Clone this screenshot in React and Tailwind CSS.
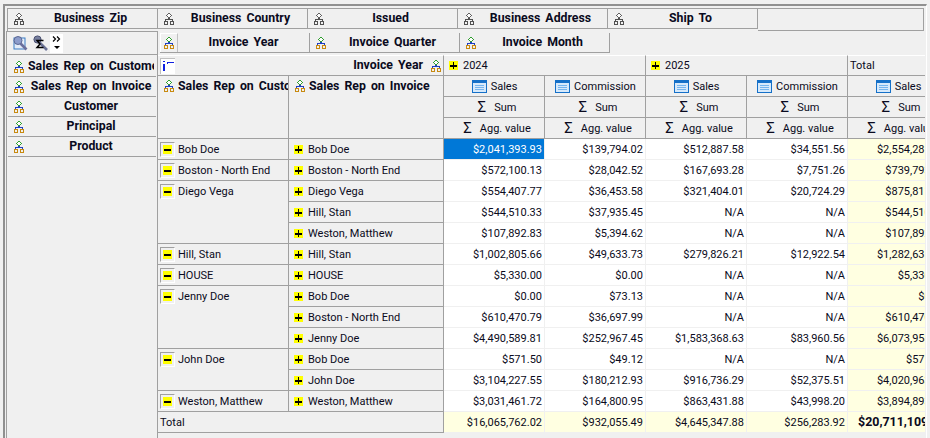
import React from "react";

const Hier = ({ gray }) => {
  const top = gray ? "#606060" : "#2e9e2e";
  const line = gray ? "#505050" : "#2040c0";
  const box = gray ? "#505050" : "#c88a10";
  return (
    <svg width="10" height="12" viewBox="0 0 10 12" className="shrink-0" shapeRendering="crispEdges">
      <path d="M4 0h2v1h1v1h1v1h-1v1h-1v1h-2v-1h-1v-1h-1v-1h1v-1h1z" fill={top} />
      <path d="M4 1h2v1h1v1h-1v1h-2v-1h-1v-1h1z" fill="#fff" />
      <path d="M4 5h2v1h3v2h-1v-1h-6v1h-1v-2h3z" fill={line} />
      <path d="M0.5 8.5h3v3h-3zM6.5 8.5h3v3h-3z" fill="none" stroke={box} />
    </svg>
  );
};

const Plus = () => (
  <span className="relative inline-block w-[9px] h-[9px] bg-[#ffff00] shrink-0">
    <span className="absolute left-[1px] top-[4px] w-[7px] h-[2px] bg-black" />
    <span className="absolute left-[4px] top-[1px] w-[1px] h-[7px] bg-black" />
  </span>
);

const Minus = () => (
  <span className="flex items-center justify-center w-[15px] h-[15px] shrink-0 border border-l-[#a0a0a0] border-t-[#a0a0a0] border-r-white border-b-white">
    <span className="relative w-[9px] h-[9px] bg-[#ffff00]">
      <span className="absolute left-[1px] top-[4px] w-[7px] h-[2px] bg-black" />
    </span>
  </span>
);

const Measure = () => (
  <svg width="15" height="13" viewBox="0 0 15 13" className="shrink-0" shapeRendering="crispEdges">
    <rect x="0.5" y="0.5" width="14" height="12" fill="#d6e9fb" stroke="#1570c8" />
    <rect x="1" y="1" width="13" height="2" fill="#1570c8" />
    <path d="M3 5h9M3 7h9M3 9h9" stroke="#74b4ee" />
  </svg>
);

const Tool1 = () => (
  <svg width="16" height="16" viewBox="0 0 16 16" className="shrink-0">
    <rect x="2" y="3" width="11" height="11" fill="#e3ecf8" stroke="#3a7cc4" />
    <circle cx="6" cy="5.5" r="4" fill="#8c9ccb" stroke="#5a6692" />
    <path d="M8.5 8.5l6 6" stroke="#6a6f9c" strokeWidth="2.6" />
  </svg>
);

const Tool2 = () => (
  <svg width="16" height="16" viewBox="0 0 16 16" className="shrink-0">
    <circle cx="5.5" cy="4.5" r="3.6" fill="#777f9f" stroke="#4a5070" />
    <path d="M7 7l8 8" stroke="#6a7194" strokeWidth="2.6" />
    <path d="M11.5 5.5H5l3 3.5-3 3.5h6.5" fill="none" stroke="#000" strokeWidth="1.5" />
  </svg>
);

const bold = "font-bold text-[12.3px] [word-spacing:2px]";

const FilterBtn = ({ label }) => (
  <div className={`w-[150px] h-[20px] flex items-center pl-[6px] border-r border-b border-[#a0a0a0] shrink-0 ${bold}`}>
    <Hier gray />
    <span className="flex-1 text-center">{label}</span>
  </div>
);

const ColBtn = ({ label, first }) => (
  <div className={`w-[150px] h-[20px] flex items-center border-r border-b border-[#a0a0a0] ${first ? "" : "pl-[6px]"} ${bold}`}>
    {first ? (
      <span className="w-[18px] h-[19px] flex items-center justify-center shrink-0 border-l border-t border-r border-l-white border-t-white border-r-[#c0c0c0]">
        <Hier />
      </span>
    ) : (
      <Hier />
    )}
    <span className="flex-1 text-center">{label}</span>
  </div>
);

const RowBtn = ({ label }) => (
  <div className={`h-[20px] flex items-center pl-[6px] border-b border-[#a0a0a0] whitespace-nowrap ${bold}`}>
    <Hier />
    <span className="flex-1 min-w-0 ml-[4px] mr-[2px] overflow-hidden text-center">{label}</span>
  </div>
);

const hdr = "border-r border-b border-[#a0a0a0] bg-[#f0f0f0] flex items-center overflow-hidden whitespace-nowrap";

const MeasureHead = ({ label }) => (
  <div className={`${hdr} justify-center gap-[4px] pl-[1px]`}>
    <Measure />
    <span>{label}</span>
  </div>
);

const SigmaHead = ({ label }) => (
  <div className={`${hdr} justify-center gap-[8px] pl-[6px]`}>
    <span className="text-[15px]">Σ</span>
    <span>{label}</span>
  </div>
);

const groups = [
  { name: "Bob Doe", rows: [["Bob Doe", "$2,041,393.93", "$139,794.02", "$512,887.58", "$34,551.56", "$2,554,281.51"]] },
  { name: "Boston - North End", rows: [["Boston - North End", "$572,100.13", "$28,042.52", "$167,693.28", "$7,751.26", "$739,793.41"]] },
  {
    name: "Diego Vega",
    rows: [
      ["Diego Vega", "$554,407.77", "$36,453.58", "$321,404.01", "$20,724.29", "$875,811.78"],
      ["Hill, Stan", "$544,510.33", "$37,935.45", "N/A", "N/A", "$544,510.33"],
      ["Weston, Matthew", "$107,892.83", "$5,394.62", "N/A", "N/A", "$107,892.83"],
    ],
  },
  { name: "Hill, Stan", rows: [["Hill, Stan", "$1,002,805.66", "$49,633.73", "$279,826.21", "$12,922.54", "$1,282,631.87"]] },
  { name: "HOUSE", rows: [["HOUSE", "$5,330.00", "$0.00", "N/A", "N/A", "$5,330.00"]] },
  {
    name: "Jenny Doe",
    rows: [
      ["Bob Doe", "$0.00", "$73.13", "N/A", "N/A", "$0.00"],
      ["Boston - North End", "$610,470.79", "$36,697.99", "N/A", "N/A", "$610,470.79"],
      ["Jenny Doe", "$4,490,589.81", "$252,967.45", "$1,583,368.63", "$83,960.56", "$6,073,958.44"],
    ],
  },
  {
    name: "John Doe",
    rows: [
      ["Bob Doe", "$571.50", "$49.12", "N/A", "N/A", "$571.50"],
      ["John Doe", "$3,104,227.55", "$180,212.93", "$916,736.29", "$52,375.51", "$4,020,963.84"],
    ],
  },
  { name: "Weston, Matthew", rows: [["Weston, Matthew", "$3,031,461.72", "$164,800.95", "$863,431.88", "$43,998.20", "$3,894,893.60"]] },
];

const val = "border-r border-b border-[#f0f0f0] flex items-center justify-end pr-[2px] whitespace-nowrap";

export default function App() {
  let selected = true;
  return (
    <div
      className="w-[930px] h-[438px] bg-[#f0f0f0] pt-[4px] pl-[3px] pr-[3px] overflow-hidden text-[11px] leading-none text-[#0a0a20]"
      style={{ fontFamily: "Roboto, sans-serif" }}
    >
      <div className="h-[434px] border-t-2 border-l-2 border-r border-t-[#909090] border-l-[#909090] border-r-white pl-[1px] pr-[1px] flex flex-col">
        <div className="h-[25px] shrink-0 pt-[2px] pl-[1px]">
          <div className="flex h-[23px] mr-[1px] border-t border-l border-r border-[#a0a0a0]">
            {["Business Zip", "Business Country", "Issued", "Business Address", "Ship To"].map((l) => (
              <FilterBtn key={l} label={l} />
            ))}
            <div className="flex-1 border-b border-[#a0a0a0]" />
          </div>
        </div>
        <div className="flex flex-1 min-h-0">
          <div className="w-[152px] shrink-0 border-r border-[#a0a0a0]">
            <div className="h-[24px] flex items-center pl-[5px] border-t border-b border-l border-[#a0a0a0]">
              <Tool1 />
              <span className="ml-[4px]"><Tool2 /></span>
              <div className="ml-[2px] w-[13px] h-[19px] bg-white flex flex-col items-center pt-[2px]">
                <svg width="9" height="6" viewBox="0 0 9 6" fill="none" stroke="#000" strokeWidth="1.2">
                  <path d="M1 0.5l2.5 2.5L1 5.5M5 0.5l2.5 2.5L5 5.5" />
                </svg>
                <span className="mt-[4px] w-0 h-0 border-l-[3px] border-r-[3px] border-t-[3px] border-l-transparent border-r-transparent border-t-black" />
              </div>
            </div>
            <div className="border-l border-[#a0a0a0] h-full pt-[2px] pl-[1px] mr-[1px]">
              {["Sales Rep on Customer", "Sales Rep on Invoice", "Customer", "Principal", "Product"].map((l) => (
                <RowBtn key={l} label={l} />
              ))}
            </div>
          </div>
          <div className="flex-1 min-w-0 overflow-hidden">
            <div className="h-[24px] flex items-start pt-[2px] pl-[2px]">
              {["Invoice Year", "Invoice Quarter", "Invoice Month"].map((l, i) => (
                <ColBtn key={l} label={l} first={i === 0} />
              ))}
            </div>
            <div className="grid w-max grid-cols-[131px_155px_101px_101px_101px_101px_101px] auto-rows-[21px]">
              <div className="col-span-2 border-t border-t-white border-r border-b border-r-[#a0a0a0] border-b-[#a0a0a0] bg-[#f0f0f0] flex items-center pl-[2px]">
                <span className="w-[15px] h-[16px] bg-white border-l border-t border-[#c0c0c0] flex items-center justify-center">
                  <svg width="12" height="12" viewBox="0 0 12 12" shapeRendering="crispEdges">
                    <path d="M1 1h2v1h-2zM1 4h2v7h-2zM5 2h7v1h-7zM5 2h1v2h-1z" fill="#1020e0" />
                  </svg>
                </span>
                <span className={`ml-auto mr-[8px] ${bold}`}>Invoice Year</span>
                <span className="mr-[2px]"><Hier /></span>
              </div>
              <div className={`${hdr} col-span-2 border-t border-t-white pl-[5px] gap-[5px]`}><Plus /><span>2024</span></div>
              <div className={`${hdr} col-span-2 border-t border-t-white pl-[5px] gap-[5px]`}><Plus /><span>2025</span></div>
              <div className={`${hdr} border-t border-t-white pl-[2px]`}>Total</div>

              <div className={`row-span-3 border-r border-b border-[#a0a0a0] bg-[#f0f0f0] flex items-start pt-[4px] pl-[6px] gap-[4px] whitespace-nowrap overflow-hidden ${bold}`}>
                <Hier /><span>Sales Rep on Customer</span>
              </div>
              <div className={`row-span-3 border-r border-b border-[#a0a0a0] bg-[#f0f0f0] flex items-start pt-[4px] pl-[6px] gap-[4px] whitespace-nowrap overflow-hidden ${bold}`}>
                <Hier /><span>Sales Rep on Invoice</span>
              </div>
              {["Sales", "Commission", "Sales", "Commission", "Sales"].map((l, i) => (
                <MeasureHead key={i} label={l} />
              ))}
              {[0, 1, 2, 3, 4].map((i) => (
                <SigmaHead key={i} label="Sum" />
              ))}
              {[0, 1, 2, 3, 4].map((i) => (
                <SigmaHead key={i} label="Agg. value" />
              ))}

              {groups.map((g) => (
                <React.Fragment key={g.name}>
                  <div
                    className="border-r border-b border-[#a0a0a0] bg-[#f0f0f0] flex items-start pt-[3px] pl-[2px] gap-[3px] whitespace-nowrap"
                    style={{ gridRow: `span ${g.rows.length}` }}
                  >
                    <Minus />
                    <span className="mt-[2px]">{g.name}</span>
                  </div>
                  {g.rows.map((r, ri) => (
                    <React.Fragment key={ri}>
                      <div className="col-start-2 border-r border-b border-[#a0a0a0] bg-[#f0f0f0] flex items-center pl-[5px] gap-[5px] whitespace-nowrap">
                        <Plus />
                        <span>{r[0]}</span>
                      </div>
                      {r.slice(1).map((v, i) => {
                        const sel = selected && i === 0;
                        if (sel) selected = false;
                        return (
                          <div
                            key={i}
                            className={
                              sel
                                ? `${val} bg-[#0078d7] text-white`
                                : i === 4
                                ? `${val} bg-[#ffffe1]`
                                : `${val} bg-white`
                            }
                          >
                            {v}
                          </div>
                        );
                      })}
                    </React.Fragment>
                  ))}
                </React.Fragment>
              ))}

              <div className="col-span-2 border-r border-b border-[#a0a0a0] bg-[#f0f0f0] flex items-center pl-[2px]">Total</div>
              {["$16,065,762.02", "$932,055.49", "$4,645,347.88", "$256,283.92"].map((v) => (
                <div key={v} className={`${val} bg-[#ffffe1]`}>{v}</div>
              ))}
              <div className={`${val} bg-[#ffffe1] font-bold text-[12.4px]`}>$20,711,109.90</div>
            </div>
          </div>
        </div>
      </div>
    </div>
  );
}
